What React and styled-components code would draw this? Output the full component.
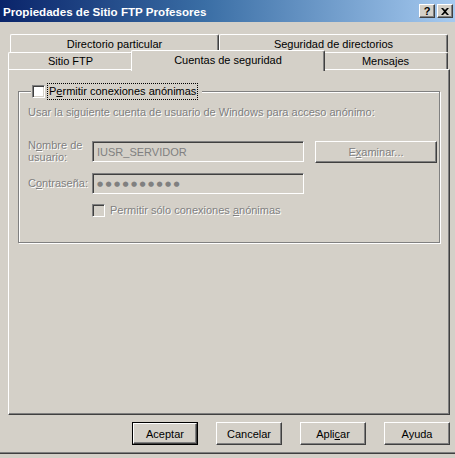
import styled, { createGlobalStyle } from "styled-components";

const GlobalStyle = createGlobalStyle`
  html, body {
    margin: 0;
    padding: 0;
    background: #d4d0c8;
  }
  body {
    font-family: "Liberation Sans", Arial, sans-serif;
    font-size: 11px;
    color: #000;
  }
`;

const Window = styled.div`
  width: 455px;
  height: 454px;
  box-sizing: border-box;
  background: #d4d0c8;
  border-bottom: 1px solid #404040;
  box-shadow: inset 0 -1px #808080;
  display: flex;
  flex-direction: column;
`;

const TitleBar = styled.div`
  height: 22px;
  flex: none;
  display: flex;
  align-items: center;
  padding: 0 2px 0 3px;
  background: linear-gradient(90deg, #0a246a 0%, #3a6ea5 45%, #a6caf0 100%);
`;

const Title = styled.span`
  flex: 1;
  color: #fff;
  font-weight: bold;
  font-size: 11.6px;
`;

const CaptionButton = styled.div`
  width: 16px;
  height: 14px;
  box-sizing: border-box;
  background: #d4d0c8;
  border-top: 1px solid #fff;
  border-left: 1px solid #fff;
  border-right: 1px solid #404040;
  border-bottom: 1px solid #404040;
  box-shadow: inset -1px -1px #808080;
  display: flex;
  align-items: center;
  justify-content: center;
  margin-left: ${(p) => (p.$gap ? "2px" : "0")};
  font-weight: bold;
  font-size: 11px;
  line-height: 1;
`;

const Body = styled.div`
  flex: 1;
  display: flex;
  flex-direction: column;
  padding: 12px 5px 0 8px;
`;

const TabRow = styled.div`
  display: flex;
  padding-left: ${(p) => p.$indent || 0}px;
`;

const Tab = styled.div`
  box-sizing: border-box;
  width: ${(p) => p.$w}px;
  height: ${(p) => p.$h}px;
  flex: none;
  background: #d4d0c8;
  border-top: 1px solid #fff;
  border-left: 1px solid #fff;
  border-right: 1px solid #404040;
  border-top-left-radius: 2px;
  border-top-right-radius: 2px;
  box-shadow: inset -1px 0 #808080;
  display: flex;
  align-items: center;
  justify-content: center;
  white-space: nowrap;
`;

const ActiveTab = styled(Tab)`
  position: relative;
  z-index: 1;
  width: ${(p) => p.$w + 4}px;
  height: ${(p) => p.$h + 4}px;
  margin: -2px -2px -2px -2px;
  padding-bottom: 3px;
`;

const Panel = styled.div`
  width: 442px;
  height: 346px;
  box-sizing: border-box;
  border-top: 1px solid #fff;
  border-left: 1px solid #fff;
  border-right: 1px solid #404040;
  border-bottom: 1px solid #404040;
  box-shadow: inset -1px -1px #808080;
  padding: 21px 9px 0 9px;
`;

const GroupBox = styled.div`
  position: relative;
  height: 152px;
  box-sizing: border-box;
  border: 1px solid #808080;
  box-shadow: inset 1px 1px #fff, 1px 1px #fff;
  padding: 14px 3px 0 9px;
`;

const Legend = styled.div`
  position: absolute;
  top: -8px;
  left: 12px;
  display: flex;
  align-items: center;
  gap: 3px;
  padding: 0 5px 0 1px;
  background: #d4d0c8;
`;

const CheckBox = styled.span`
  width: 13px;
  height: 13px;
  box-sizing: border-box;
  flex: none;
  background: ${(p) => (p.$disabled ? "#d4d0c8" : "#fff")};
  border-top: 1px solid #808080;
  border-left: 1px solid #808080;
  border-right: 1px solid #fff;
  border-bottom: 1px solid #fff;
  box-shadow: inset 1px 1px #404040, inset -1px -1px #d4d0c8;
`;

const FocusLabel = styled.span`
  outline: 1px dotted #000;
  outline-offset: 0;
  padding: 1px;
  line-height: 13px;
`;

const DimText = styled.div`
  color: #808080;
  text-shadow: 1px 1px 0 #fff;
  line-height: 13px;
`;

const FormGrid = styled.div`
  display: grid;
  grid-template-columns: 53px 212px 122px;
  column-gap: 11px;
  row-gap: 10px;
  margin-top: 22px;
  align-items: start;
`;

const FieldLabel = styled(DimText)`
  line-height: 12px;
  white-space: nowrap;
  margin-top: ${(p) => p.$top || 0}px;
`;

const TextBox = styled.div`
  height: ${(p) => p.$h || 21}px;
  box-sizing: border-box;
  background: #d4d0c8;
  border-top: 1px solid #808080;
  border-left: 1px solid #808080;
  border-right: 1px solid #fff;
  border-bottom: 1px solid #fff;
  box-shadow: inset 1px 1px #404040, inset -1px -1px #d4d0c8;
  display: flex;
  align-items: center;
  padding-left: 4px;
  color: #808080;
`;

const Dots = styled.span`
  font-family: "DejaVu Sans", sans-serif;
  font-size: 7px;
  letter-spacing: 2.4px;
  color: #808080;
`;

const PushButton = styled.div`
  box-sizing: border-box;
  width: ${(p) => p.$w || 66}px;
  height: ${(p) => p.$h || 23}px;
  background: #d4d0c8;
  border-top: 1px solid #fff;
  border-left: 1px solid #fff;
  border-right: 1px solid #404040;
  border-bottom: 1px solid #404040;
  box-shadow: inset -1px -1px #808080;
  display: flex;
  align-items: center;
  justify-content: center;
  color: ${(p) => (p.$disabled ? "#808080" : "#000")};
  text-shadow: ${(p) => (p.$disabled ? "1px 1px 0 #fff" : "none")};
`;

const DefaultFrame = styled.div`
  border: 1px solid #000;
  display: flex;
`;

const CheckRow = styled.div`
  grid-column: 2 / 4;
  display: flex;
  align-items: center;
  gap: 5px;
`;

const Footer = styled.div`
  display: flex;
  justify-content: flex-end;
  gap: 18px;
  padding: 7px 0 0 0;
`;

const CloseGlyph = () => (
  <svg width="8" height="7" viewBox="0 0 8 7">
    <path d="M0 0h2l2 2 2-2h2L5 3.5 8 7H6L4 5 2 7H0l3-3.5z" fill="#000" />
  </svg>
);

export default function App() {
  return (
    <>
      <GlobalStyle />
      <Window>
        <TitleBar>
          <Title>Propiedades de Sitio FTP Profesores</Title>
          <CaptionButton>?</CaptionButton>
          <CaptionButton $gap>
            <CloseGlyph />
          </CaptionButton>
        </TitleBar>

        <Body>
          <TabRow $indent={2}>
            <Tab $w={209} $h={18}>Directorio particular</Tab>
            <Tab $w={229} $h={18}>Seguridad de directorios</Tab>
          </TabRow>
          <TabRow>
            <Tab $w={125} $h={17}>Sitio FTP</Tab>
            <ActiveTab $w={190} $h={17}>Cuentas de seguridad</ActiveTab>
            <Tab $w={125} $h={17}>Mensajes</Tab>
          </TabRow>

          <Panel>
            <GroupBox>
              <Legend>
                <CheckBox />
                <FocusLabel>
                  P<u>e</u>rmitir conexiones anónimas
                </FocusLabel>
              </Legend>

              <DimText>
                Usar la siguiente cuenta de usuario de Windows para acceso anónimo:
              </DimText>

              <FormGrid>
                <FieldLabel $top={-2}>
                  N<u>o</u>mbre de
                  <br />
                  usuario:
                </FieldLabel>
                <TextBox>IUSR_SERVIDOR</TextBox>
                <PushButton $w={122} $h={22} $disabled>
                  E<u>x</u>aminar...
                </PushButton>

                <FieldLabel $top={4}>
                  C<u>o</u>ntraseña:
                </FieldLabel>
                <TextBox $h={21}>
                  <Dots>●●●●●●●●●●</Dots>
                </TextBox>
                <div />

                <CheckRow>
                  <CheckBox $disabled />
                  <DimText>
                    Permitir sólo conexiones <u>a</u>nónimas
                  </DimText>
                </CheckRow>
              </FormGrid>
            </GroupBox>
          </Panel>

          <Footer>
            <DefaultFrame>
              <PushButton $w={64} $h={21}>Aceptar</PushButton>
            </DefaultFrame>
            <PushButton>Cancelar</PushButton>
            <PushButton>
              Apli<u>c</u>ar
            </PushButton>
            <PushButton>Ayuda</PushButton>
          </Footer>
        </Body>
      </Window>
    </>
  );
}
